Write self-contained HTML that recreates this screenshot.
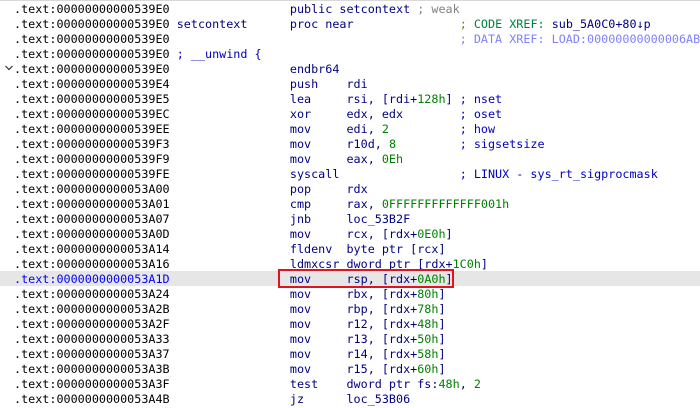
<!DOCTYPE html>
<html><head><meta charset="utf-8"><style>
body{margin:0;width:700px;height:408px;background:#fff;overflow:hidden;position:relative;font-family:"DejaVu Sans Mono","Liberation Mono",monospace;font-size:11.75px}
.top{position:absolute;left:0;top:0;width:700px;height:1px;background:#d8d8d8}
.l{position:absolute;left:14px;height:15px;line-height:15px;white-space:pre;color:#000;width:686px}
.a{color:#000}
.m{color:#000080}
.n{color:#008000}
.c{color:#0000c0}
.g{color:#808080}
.x{color:#8080ff}
.y{color:#808000}
.cx{color:#008040}
.hl{position:absolute;left:0;top:271px;width:700px;height:15px;background:#e6e6e6}
.box{position:absolute;left:278px;top:269px;width:172px;height:15px;border:2px solid #e0141e}
.chev{position:absolute;left:4px;top:63px}
</style></head><body>
<div class="top"></div>
<div class="hl"></div>
<svg class="chev" width="10" height="10" viewBox="0 0 10 10"><path d="M1.5 3 L5 6.5 L8.5 3" stroke="#333" stroke-width="1.2" fill="none"/></svg>
<div class="l" style="top:1.5px">.text:00000000000539E0                 <span class="m">public setcontext</span> <span class="g">; weak</span></div>
<div class="l" style="top:16.5px">.text:00000000000539E0 <span class="m">setcontext      proc near</span>               <span class="y">;</span> <span class="cx">CODE XREF:</span> <span class="m">sub_5A0C0+80↓p</span></div>
<div class="l" style="top:31.5px">.text:00000000000539E0                                         <span class="x">; DATA XREF: LOAD:00000000000006AB01</span></div>
<div class="l" style="top:46.5px">.text:00000000000539E0 <span class="c">; __unwind {</span></div>
<div class="l" style="top:61.5px">.text:00000000000539E0                 <span class="m">endbr64</span></div>
<div class="l" style="top:76.5px">.text:00000000000539E4                 <span class="m">push    rdi</span></div>
<div class="l" style="top:91.5px">.text:00000000000539E5                 <span class="m">lea     rsi, [rdi+<span class="n">128h</span>]</span> <span class="c">; nset</span></div>
<div class="l" style="top:106.5px">.text:00000000000539EC                 <span class="m">xor     edx, edx</span>        <span class="c">; oset</span></div>
<div class="l" style="top:121.5px">.text:00000000000539EE                 <span class="m">mov     edi, <span class="n">2</span></span>          <span class="c">; how</span></div>
<div class="l" style="top:136.5px">.text:00000000000539F3                 <span class="m">mov     r10d, <span class="n">8</span></span>         <span class="c">; sigsetsize</span></div>
<div class="l" style="top:151.5px">.text:00000000000539F9                 <span class="m">mov     eax, <span class="n">0Eh</span></span></div>
<div class="l" style="top:166.5px">.text:00000000000539FE                 <span class="m">syscall</span>                 <span class="c">; LINUX - sys_rt_sigprocmask</span></div>
<div class="l" style="top:181.5px">.text:0000000000053A00                 <span class="m">pop     rdx</span></div>
<div class="l" style="top:196.5px">.text:0000000000053A01                 <span class="m">cmp     rax, <span class="n">0FFFFFFFFFFFFF001h</span></span></div>
<div class="l" style="top:211.5px">.text:0000000000053A07                 <span class="m">jnb     loc_53B2F</span></div>
<div class="l" style="top:226.5px">.text:0000000000053A0D                 <span class="m">mov     rcx, [rdx+<span class="n">0E0h</span>]</span></div>
<div class="l" style="top:241.5px">.text:0000000000053A14                 <span class="m">fldenv  byte ptr [rcx]</span></div>
<div class="l" style="top:256.5px">.text:0000000000053A16                 <span class="m">ldmxcsr dword ptr [rdx+<span class="n">1C0h</span>]</span></div>
<div class="l" style="top:271.5px"><span style="color:#0000ff">.text:0000000000053A1D</span>                 <span class="m">mov     rsp, [rdx+<span class="n">0A0h</span>]</span></div>
<div class="l" style="top:286.5px">.text:0000000000053A24                 <span class="m">mov     rbx, [rdx+<span class="n">80h</span>]</span></div>
<div class="l" style="top:301.5px">.text:0000000000053A2B                 <span class="m">mov     rbp, [rdx+<span class="n">78h</span>]</span></div>
<div class="l" style="top:316.5px">.text:0000000000053A2F                 <span class="m">mov     r12, [rdx+<span class="n">48h</span>]</span></div>
<div class="l" style="top:331.5px">.text:0000000000053A33                 <span class="m">mov     r13, [rdx+<span class="n">50h</span>]</span></div>
<div class="l" style="top:346.5px">.text:0000000000053A37                 <span class="m">mov     r14, [rdx+<span class="n">58h</span>]</span></div>
<div class="l" style="top:361.5px">.text:0000000000053A3B                 <span class="m">mov     r15, [rdx+<span class="n">60h</span>]</span></div>
<div class="l" style="top:376.5px">.text:0000000000053A3F                 <span class="m">test    dword ptr fs:<span class="n">48h</span>, <span class="n">2</span></span></div>
<div class="l" style="top:391.5px">.text:0000000000053A4B                 <span class="m">jz      loc_53B06</span></div>
<div class="box"></div>
</body></html>
